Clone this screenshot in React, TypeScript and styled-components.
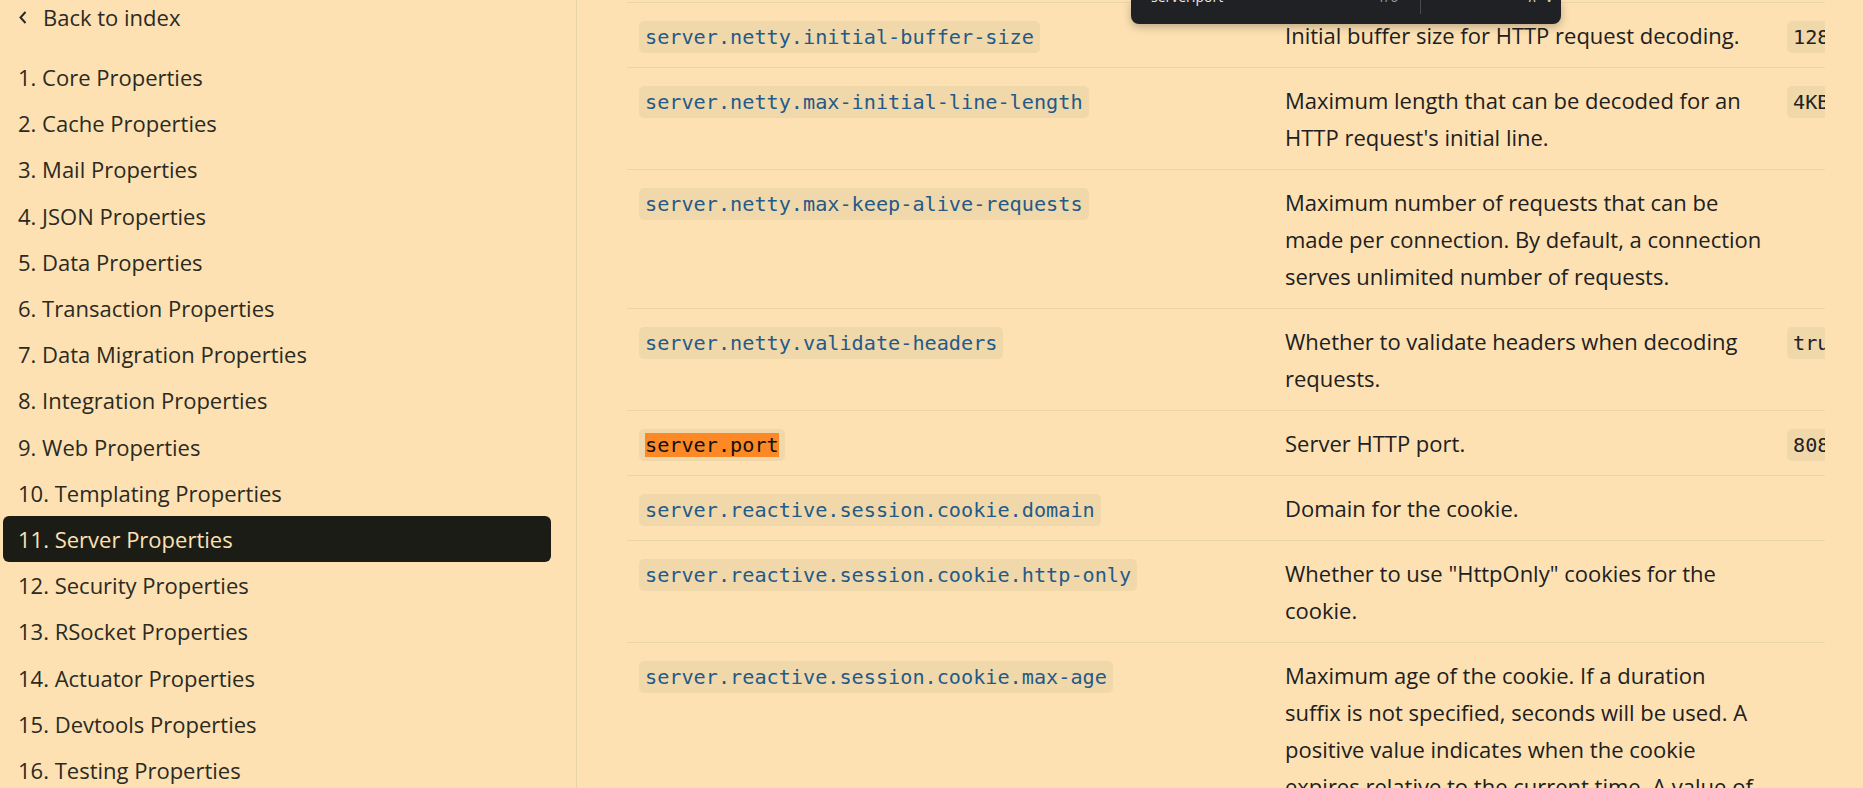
import React from "react";
import styled, { createGlobalStyle } from "styled-components";

const GlobalStyle = createGlobalStyle`
	html, body {
		margin: 0;
		padding: 0;
		background: #fde1b3;
		overflow: hidden;
	}
	* {
		box-sizing: border-box;
	}
`;

// --- układ strony ---
const Page = styled.div`
	display: flex;
	width: 1863px;
	height: 788px;
	overflow: hidden;
	position: relative;
	font-family: "Open Sans", "Noto Sans", sans-serif;
	color: #222;
`;

// --- sidebar ---
const Sidebar = styled.nav`
	width: 577px;
	flex: 0 0 577px;
	border-right: 1px solid #e8d2a7;
	padding: 0 25px 0 3px;
	display: flex;
	flex-direction: column;
	overflow: hidden;
`;

const BackLink = styled.a`
	display: flex;
	align-items: center;
	flex-shrink: 0;
	gap: 15px;
	height: 34px;
	padding-left: 15px;
	margin-bottom: 20px;
	font-size: 22px;
	color: #2a2a22;
	text-decoration: none;
`;

const NavItem = styled.a<{ $active?: boolean }>`
	display: flex;
	align-items: center;
	flex: 0 0 46.2px;
	padding: 0 15px;
	border-radius: 6px;
	font-size: 22px;
	text-decoration: none;
	color: ${({ $active }) => ($active ? "#fde1b3" : "#2a2a22")};
	background: ${({ $active }) => ($active ? "#1b1c15" : "transparent")};
`;

// --- tabela ---
const Main = styled.main`
	flex: 1;
	padding: 2px 0 0 50px;
`;

const TableClip = styled.div`
	width: 1198px;
	overflow: hidden;
`;

const Table = styled.table`
	width: 1300px;
	table-layout: fixed;
	border-collapse: collapse;
	font-size: 22px;
	line-height: 37px;
`;

const Row = styled.tr`
	border-top: 1px solid #ead4aa;
	border-bottom: 1px solid #ead4aa;
`;

const Cell = styled.td<{ $w: number }>`
	width: ${({ $w }) => $w}px;
	padding: 13.5px 12px;
	vertical-align: top;
	color: #202020;
`;

const Code = styled.code<{ $plain?: boolean }>`
	font-family: "DejaVu Sans Mono", "Liberation Mono", monospace;
	font-size: 20.2px;
	line-height: 24px;
	padding: 4px 6px;
	border-radius: 5px;
	background: #f1d8aa;
	white-space: nowrap;
	color: ${({ $plain }) => ($plain ? "#222" : "#245a88")};
`;

const Hit = styled.mark`
	background: #fd8826;
	color: #111;
`;

// --- pasek wyszukiwania (częściowo poza ekranem) ---
const FindBar = styled.div`
	position: absolute;
	top: 0;
	left: 1131px;
	width: 430px;
	height: 24px;
	background: #202124;
	border-radius: 0 0 8px 8px;
	box-shadow: 0 3px 8px rgba(0, 0, 0, 0.25);
	display: flex;
	align-items: flex-start;
	padding-left: 20px;
	overflow: hidden;
	font-family: "Open Sans", sans-serif;
	font-size: 14px;
	line-height: 16px;
`;

const FindQuery = styled.span`
	margin-top: -11px;
	color: #e8e8e8;
	width: 226px;
`;

const FindCount = styled.span`
	margin-top: -11px;
	color: #9a9a9a;
	width: 43px;
`;

const FindDivider = styled.span`
	width: 1px;
	height: 14px;
	background: #4a4b4f;
	margin-right: 106px;
`;

const FindArrow = styled.span`
	margin-top: -11px;
	color: #c8c8c8;
`;

const sections = [
	"Core Properties",
	"Cache Properties",
	"Mail Properties",
	"JSON Properties",
	"Data Properties",
	"Transaction Properties",
	"Data Migration Properties",
	"Integration Properties",
	"Web Properties",
	"Templating Properties",
	"Server Properties",
	"Security Properties",
	"RSocket Properties",
	"Actuator Properties",
	"Devtools Properties",
	"Testing Properties",
];

const props = [
	{
		name: "server.netty.initial-buffer-size",
		desc: "Initial buffer size for HTTP request decoding.",
		def: "128B",
	},
	{
		name: "server.netty.max-initial-line-length",
		desc: "Maximum length that can be decoded for an HTTP request's initial line.",
		def: "4KB",
	},
	{
		name: "server.netty.max-keep-alive-requests",
		desc: "Maximum number of requests that can be made per connection. By default, a connection serves unlimited number of requests.",
	},
	{
		name: "server.netty.validate-headers",
		desc: "Whether to validate headers when decoding requests.",
		def: "true",
	},
	{
		name: "server.port",
		desc: "Server HTTP port.",
		def: "8080",
		hit: true,
	},
	{
		name: "server.reactive.session.cookie.domain",
		desc: "Domain for the cookie.",
	},
	{
		name: "server.reactive.session.cookie.http-only",
		desc: 'Whether to use "HttpOnly" cookies for the cookie.',
	},
	{
		name: "server.reactive.session.cookie.max-age",
		desc: 'Maximum age of the cookie. If a duration suffix is not specified, seconds will be used. A positive value indicates when the cookie expires relative to the current time. A value of 0 means the cookie should expire immediately. A negative value means no "Max-Age".',
	},
];

export default function App() {
	return (
		<Page>
			<GlobalStyle />
			<Sidebar>
				<BackLink>
					<svg width='10' height='15' viewBox='0 0 10 15'>
						<polyline points='7.5,2 2.5,7.5 7.5,13' fill='none' stroke='#2a2a22' strokeWidth='2' />
					</svg>
					Back to index
				</BackLink>
				{sections.map((s, i) => (
					<NavItem key={s} $active={i === 10}>
						{i + 1}. {s}
					</NavItem>
				))}
			</Sidebar>

			<Main>
				<TableClip>
					<Table>
						<tbody>
							{props.map((p) => (
								<Row key={p.name}>
									<Cell $w={646}>
										<Code>{p.hit ? <Hit>{p.name}</Hit> : p.name}</Code>
									</Cell>
									<Cell $w={502}>{p.desc}</Cell>
									<Cell $w={152}>{p.def && <Code $plain>{p.def}</Code>}</Cell>
								</Row>
							))}
						</tbody>
					</Table>
				</TableClip>
			</Main>

			<FindBar>
				<FindQuery>server.port</FindQuery>
				<FindCount>1/6</FindCount>
				<FindDivider />
				<FindArrow>∧&nbsp;&nbsp;∨</FindArrow>
			</FindBar>
		</Page>
	);
}
